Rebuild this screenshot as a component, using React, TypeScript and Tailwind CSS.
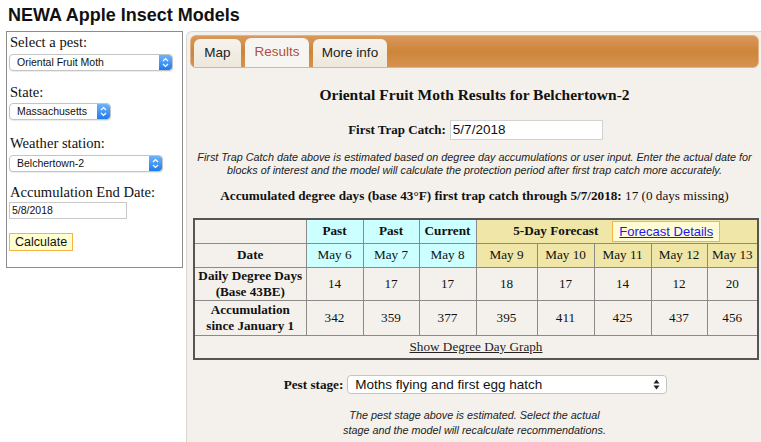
import React from 'react';

const serif = "font-['Liberation_Serif','Times_New_Roman',serif]";
const sans = "font-['Liberation_Sans',Arial,sans-serif]";

const MacSelect = ({ label, width }: { label: string; width: string }) => (
  <div className={`${width} h-[17px] flex items-stretch rounded-[4px] border border-[#c4c4c4] bg-white shadow-[0_1px_1px_rgba(0,0,0,0.08)] overflow-hidden`}>
    <span className={`${sans} flex-1 text-[10.5px] leading-[15px] pl-[7px] text-[#111]`}>{label}</span>
    <span className="w-[13px] flex items-center justify-center bg-gradient-to-b from-[#6cb3fa] to-[#1a7cf0] rounded-r-[3px]">
      <svg width="7" height="11" viewBox="0 0 7 11">
        <path d="M1 4 L3.5 1.5 L6 4" stroke="white" strokeWidth="1.2" fill="none" />
        <path d="M1 7 L3.5 9.5 L6 7" stroke="white" strokeWidth="1.2" fill="none" />
      </svg>
    </span>
  </div>
);

const past = 'bg-[#ccffff]';
const fc = 'bg-[#efe6a8]';
const cell = 'border border-[#8a8a8a] text-center';

export default function App() {
  const dates = ['May 6', 'May 7', 'May 8', 'May 9', 'May 10', 'May 11', 'May 12', 'May 13'];
  const daily = [14, 17, 17, 18, 17, 14, 12, 20];
  const accum = [342, 359, 377, 395, 411, 425, 437, 456];
  const widths = ['w-[112px]', 'w-[57px]', 'w-[56px]', 'w-[57px]', 'w-[61px]', 'w-[57px]', 'w-[57px]', 'w-[56px]', 'w-[51px]'];

  return (
    <div className="w-[761px] h-[442px] overflow-hidden bg-white text-[#111]">
      <h1 className={`${sans} font-bold text-[18px] leading-[22px] pl-[8px] pt-[4px] h-[31px]`}>NEWA Apple Insect Models</h1>
      <div className="flex items-start">
        {/* left form */}
        <div className={`${serif} ml-[6px] w-[178px] h-[237px] border border-[#8c8c8c] px-[2px] pt-[1px] text-[14.6px]`}>
          <div className="leading-[18px] pl-[1px]">Select a pest:</div>
          <div className="mt-[3px]"><MacSelect label="Oriental Fruit Moth" width="w-[164px]" /></div>
          <div className="leading-[18px] mt-[12px] pl-[1px]">State:</div>
          <div className="mt-[2px]"><MacSelect label="Massachusetts" width="w-[102px]" /></div>
          <div className="leading-[18px] mt-[14px] pl-[1px]">Weather station:</div>
          <div className="mt-[3px]"><MacSelect label="Belchertown-2" width="w-[154px]" /></div>
          <div className="leading-[18px] mt-[11px] pl-[1px]">Accumulation End Date:</div>
          <div className={`${sans} mt-[1px] w-[118px] h-[17px] border border-[#c9c9c9] bg-white text-[10.5px] leading-[15px] pl-[2px]`}>5/8/2018</div>
          <button className={`${sans} block mt-[14px] h-[18px] px-[5px] border border-[#f5b445] bg-[#ffffd0] text-[12.5px] leading-[15px] text-[#111]`}>Calculate</button>
        </div>

        {/* main panel */}
        <div className="ml-[3px] flex-1 h-[411px] bg-[#f4f1ec] border-l border-t border-[#d9d6d2] rounded-tl-[6px] pl-[3px] pr-[2px] pt-[3px]">
          <div className="h-[33px] rounded-[6px] bg-gradient-to-b from-[#d9995a] via-[#cd8538] to-[#d59250] flex items-end pl-[3px] gap-[4px] border border-[#e2b288]">
            <div className={`${sans} h-[28px] w-[47px] rounded-t-[6px] bg-gradient-to-b from-[#f6f2ec] to-[#eee7dd] text-[13.5px] text-[#222] flex items-center justify-center`}>Map</div>
            <div className={`${sans} h-[29px] w-[64px] rounded-t-[6px] bg-[#f7f5f1] text-[13.5px] text-[#b0503a] flex items-center justify-center`}>Results</div>
            <div className={`${sans} h-[28px] w-[74px] rounded-t-[6px] bg-gradient-to-b from-[#f6f2ec] to-[#eee7dd] text-[13.5px] text-[#222] flex items-center justify-center`}>More info</div>
          </div>

          <div className={`${serif} text-center`}>
            <h2 className="font-bold text-[15.5px] leading-[20px] mt-[17px]">Oriental Fruit Moth Results for Belchertown-2</h2>
            <div className="flex items-center justify-center mt-[15px] gap-[4px] pl-[2px] h-[20px]">
              <span className="font-bold text-[13px]">First Trap Catch:</span>
              <div className={`${sans} w-[153px] h-[20px] bg-white border border-[#d2d2d2] text-left text-[13.5px] leading-[18px] pl-[2px]`}>5/7/2018</div>
            </div>
            <p className={`${sans} italic text-[10.8px] leading-[13px] mt-[11px] text-[#222]`}>
              First Trap Catch date above is estimated based on degree day accumulations or user input. Enter the actual date for
              <br />
              blocks of interest and the model will calculate the protection period after first trap catch more accurately.
            </p>
            <div className="text-[13.2px] leading-[16px] mt-[11px]">
              <b>Accumulated degree days (base 43°F) first trap catch through 5/7/2018:</b> 17 (0 days missing)
            </div>

            <table className="mt-[14px] ml-[3px] w-[564px] border-collapse border-2 border-[#555] text-[13.2px] table-fixed">
              <colgroup>
                {widths.map((w, i) => <col key={i} className={w} />)}
              </colgroup>
              <tbody>
                <tr className="h-[24px]">
                  <td className={cell}></td>
                  <td className={`${cell} ${past} font-bold`}>Past</td>
                  <td className={`${cell} ${past} font-bold`}>Past</td>
                  <td className={`${cell} ${past} font-bold`}>Current</td>
                  <td colSpan={5} className={`${cell} ${fc}`}>
                    <div className="flex items-center justify-center gap-[14px]">
                      <b>5-Day Forecast</b>
                      <span className={`${sans} border border-[#f5b445] bg-[#fffbd4] px-[6px] h-[21px] leading-[19px] text-[13px] text-[#1a1aee] underline`}>Forecast Details</span>
                    </div>
                  </td>
                </tr>
                <tr className="h-[24px]">
                  <td className={`${cell} font-bold`}>Date</td>
                  {dates.map((d, i) => (
                    <td key={d} className={`${cell} ${i < 3 ? past : fc}`}>{d}</td>
                  ))}
                </tr>
                <tr className="h-[33px]">
                  <td className={`${cell} font-bold leading-[16px]`}>Daily Degree Days<br />(Base 43BE)</td>
                  {daily.map((v, i) => <td key={i} className={cell}>{v}</td>)}
                </tr>
                <tr className="h-[35px]">
                  <td className={`${cell} font-bold leading-[16px]`}>Accumulation<br />since January 1</td>
                  {accum.map((v, i) => <td key={i} className={cell}>{v}</td>)}
                </tr>
                <tr className="h-[24px]">
                  <td colSpan={9} className={cell}>
                    <span className="underline text-[#222]">Show Degree Day Graph</span>
                  </td>
                </tr>
              </tbody>
            </table>

            <div className="flex items-center justify-center mt-[15px] gap-[4px] pl-[2px]">
              <span className="font-bold text-[13.2px]">Pest stage:</span>
              <div className={`${sans} w-[320px] h-[19px] bg-white border border-[#c4c4c4] rounded-[4px] flex items-center justify-between pl-[7px] pr-[6px] text-[13.5px] text-[#111]`}>
                <span>Moths flying and first egg hatch</span>
                <svg width="7" height="11" viewBox="0 0 7 11">
                  <path d="M0.5 4.5 L3.5 0.5 L6.5 4.5 Z" fill="#222" />
                  <path d="M0.5 6.5 L3.5 10.5 L6.5 6.5 Z" fill="#222" />
                </svg>
              </div>
            </div>
            <p className={`${sans} italic text-[10.8px] leading-[15px] mt-[13px] text-[#222]`}>
              The pest stage above is estimated. Select the actual
              <br />
              stage and the model will recalculate recommendations.
            </p>
          </div>
        </div>
      </div>
    </div>
  );
}
